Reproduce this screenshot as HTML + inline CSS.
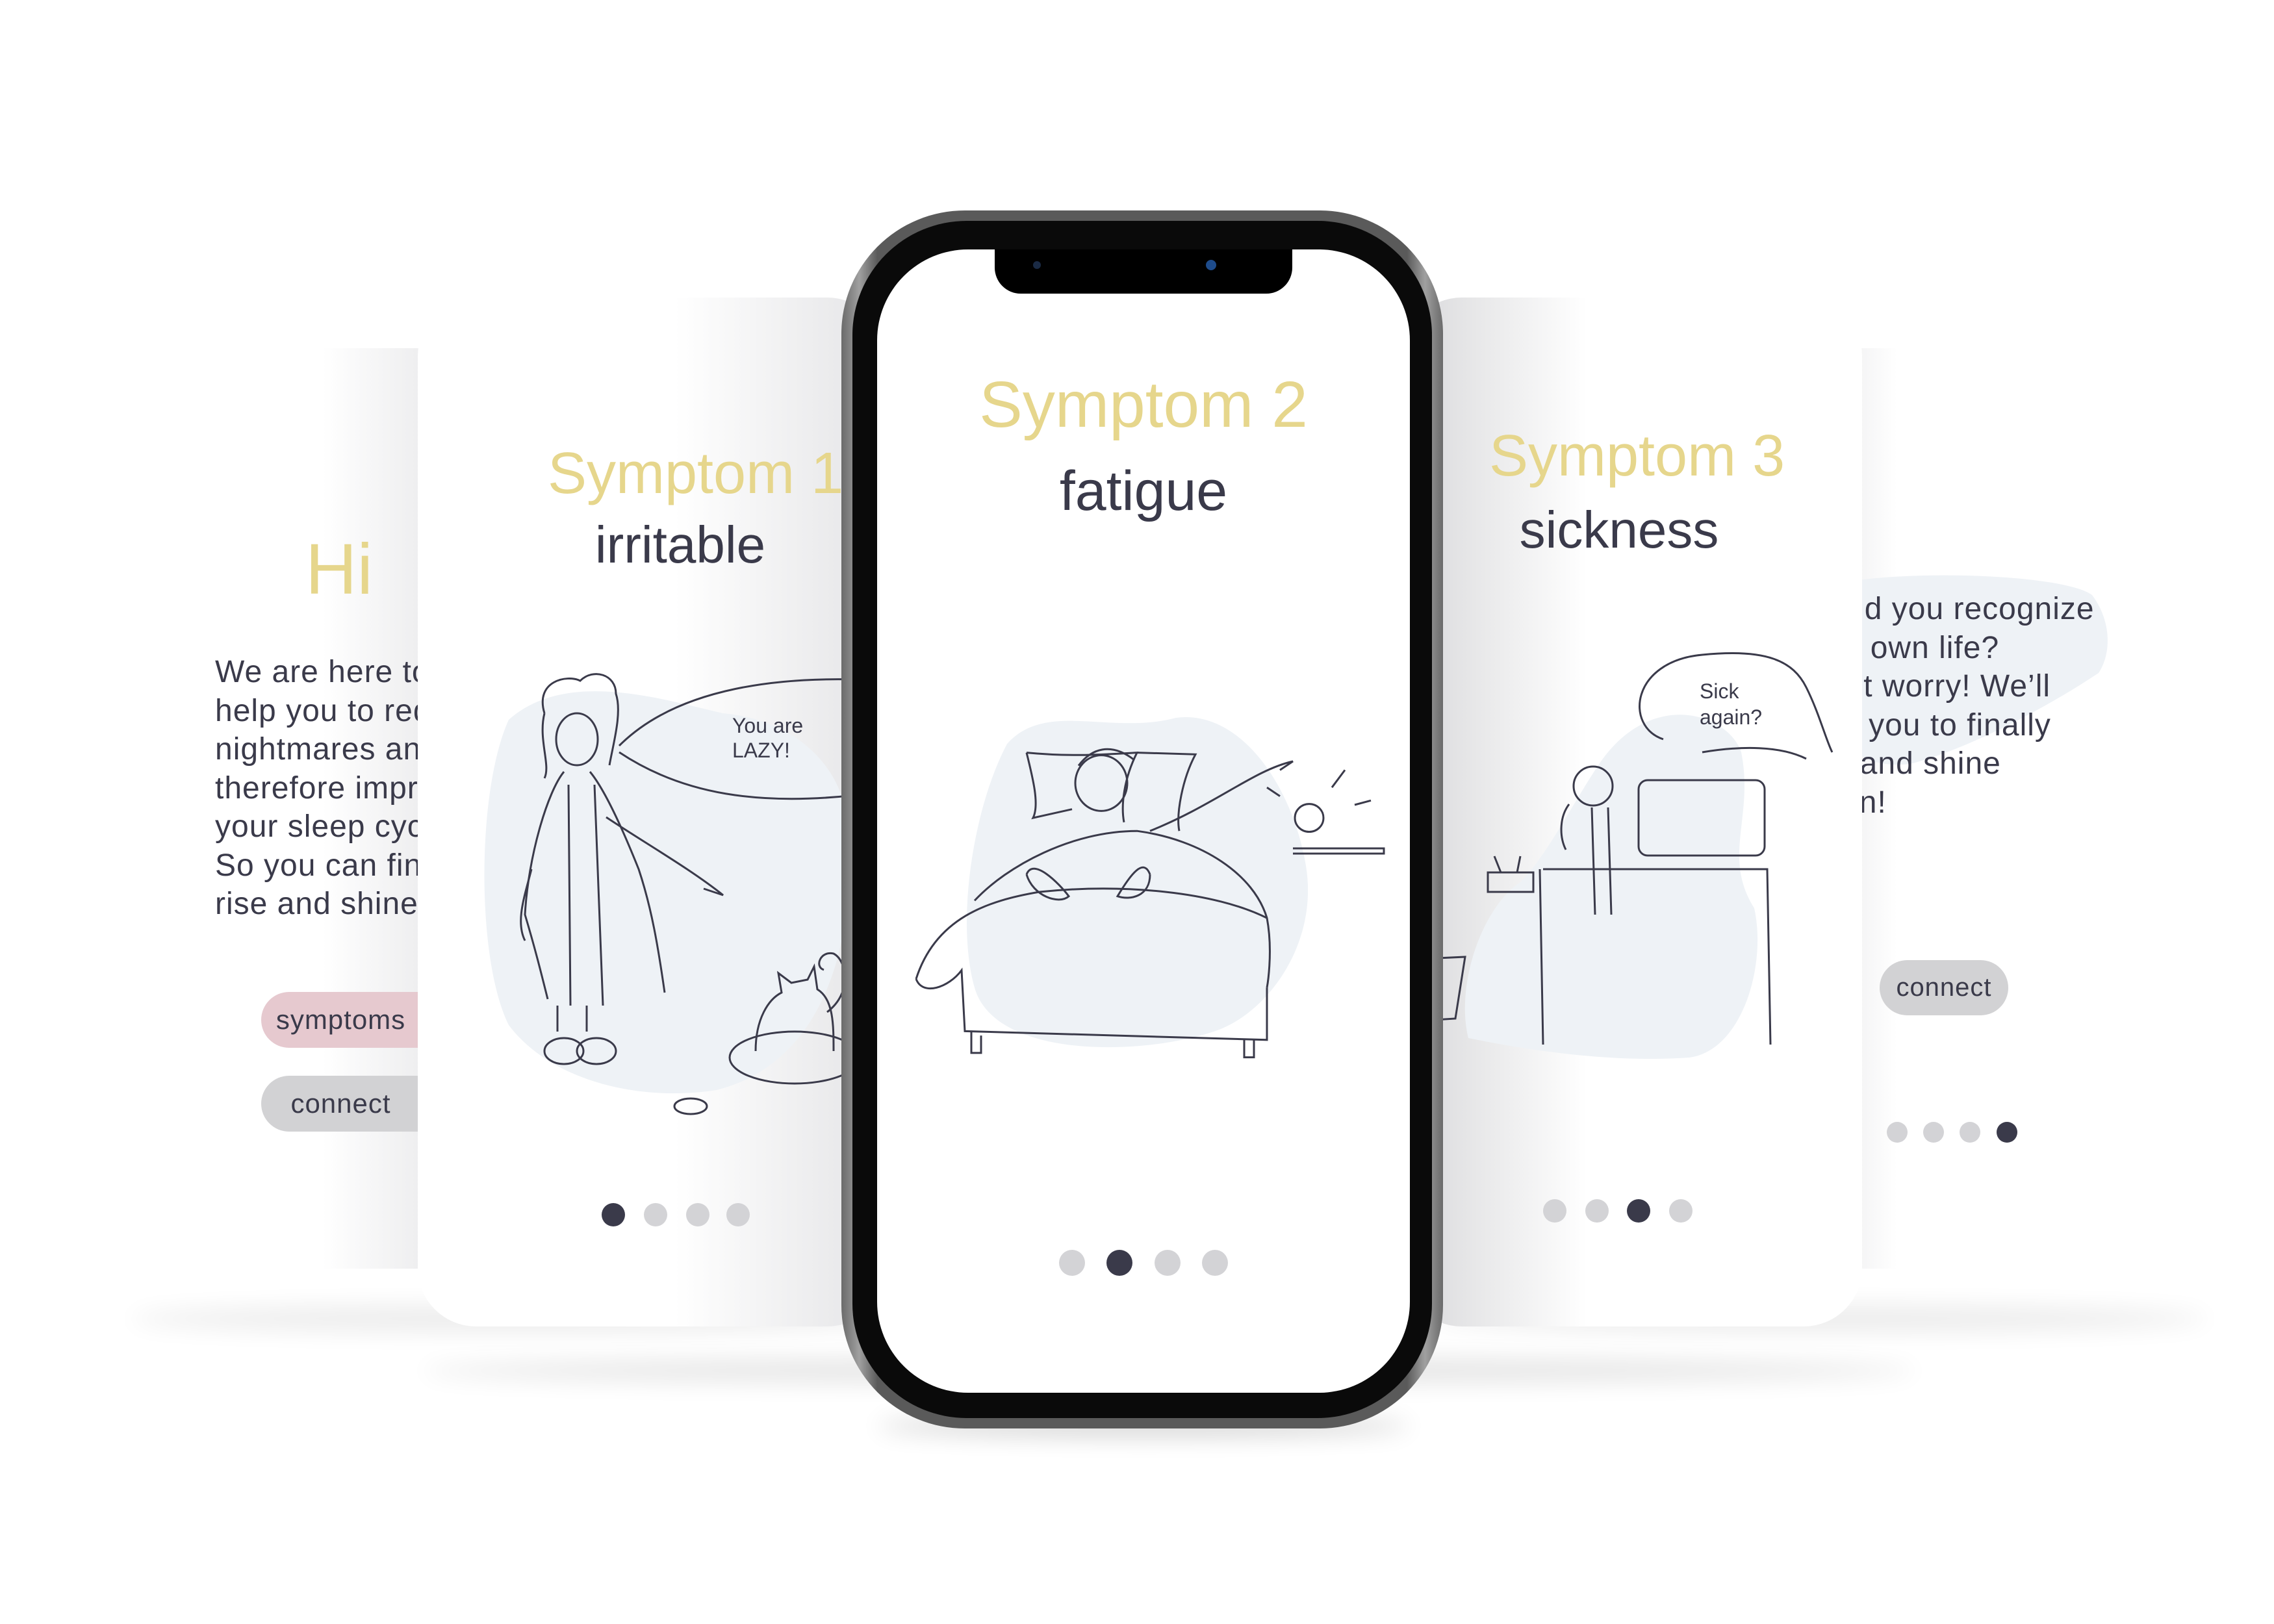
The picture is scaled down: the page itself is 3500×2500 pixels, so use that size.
<!DOCTYPE html>
<html><head><meta charset="utf-8"><style>
*{margin:0;padding:0;box-sizing:border-box}
body{width:3500px;height:2500px;background:#fff;position:relative;overflow:hidden;font-family:"Liberation Sans","DejaVu Sans",sans-serif}
.abs{position:absolute}
.card{position:absolute;background:#fff;border-radius:90px;overflow:hidden}
.sh{position:absolute;border-radius:50%;background:#000;filter:blur(18px)}
.y{color:#e6d68c;position:absolute;white-space:nowrap;line-height:1;text-align:center}
.d{color:#3a3a4a;position:absolute;white-space:nowrap;line-height:1;text-align:center}
.dot{position:absolute;border-radius:50%;background:#d3d3d6}
.dot.a{background:#3a3a4a}
.pill{position:absolute;border-radius:60px;text-align:center;color:#3a3a4a;letter-spacing:1px}
.body{position:absolute;color:#3a3a4a;font-size:48px;line-height:59.5px;letter-spacing:1px;white-space:nowrap}
svg g{vector-effect:non-scaling-stroke}
</style></head><body>

<div class="sh" style="left:200px;top:2010px;width:1200px;height:40px;opacity:.08"></div>
<div class="sh" style="left:2200px;top:2010px;width:1200px;height:40px;opacity:.08"></div>
<div class="sh" style="left:650px;top:2090px;width:2300px;height:40px;opacity:.10"></div>
<div class="sh" style="left:1350px;top:2180px;width:820px;height:30px;opacity:.18"></div>

<!-- back left card -->
<div class="card" style="left:160px;top:536px;width:560px;height:1417px;border-radius:80px;background:linear-gradient(90deg,#fff 0%,#fff 60%,#e6e6e8 100%)"></div>
<div class="y" style="left:470px;top:822px;font-size:110px;text-align:left">Hi</div>
<div class="body" style="left:331px;top:1005px;width:312px;overflow:hidden">We are here to<br>help you to reduce<br>nightmares and<br>therefore improve<br>your sleep cycle.<br>So you can finally<br>rise and shine!</div>
<div class="pill" style="left:402px;top:1527px;width:300px;height:86px;background:#e6c9cf;font-size:42px;line-height:86px;padding-right:55px">symptoms</div>
<div class="pill" style="left:402px;top:1656px;width:300px;height:86px;background:#d2d2d4;font-size:42px;line-height:86px;padding-right:55px">connect</div>

<!-- back right card -->
<div class="card" style="left:2780px;top:536px;width:560px;height:1417px;border-radius:80px;background:linear-gradient(90deg,#e6e6e8 0%,#fff 25%,#fff 100%)">
<svg class="abs" style="left:0;top:0" width="560" height="1417"><path d="M60 360 C180 340 400 350 440 380 C470 420 470 470 450 500 C360 560 240 620 160 640 C80 650 40 600 40 540 Z" fill="#eef2f6"/></svg>
<div class="body" style="left:-13px;top:372px">Could you recognize<br>your own life?<br>Don't worry! We’ll<br>help you to finally<br>rise and shine<br>again!</div>
<div class="pill" style="left:113px;top:942px;width:198px;height:85px;background:#d2d2d4;font-size:40px;line-height:85px">connect</div>
<div class="dot" style="left:124px;top:1191px;width:32px;height:32px"></div>
<div class="dot" style="left:180px;top:1191px;width:32px;height:32px"></div>
<div class="dot" style="left:236px;top:1191px;width:32px;height:32px"></div>
<div class="dot a" style="left:293px;top:1191px;width:32px;height:32px"></div>
</div>

<!-- left card -->
<div class="card" style="left:643px;top:458px;width:720px;height:1584px;background:linear-gradient(90deg,#fff 0%,#fff 55%,#e4e4e6 100%)">
<svg class="abs" style="left:0;top:0" width="720" height="1584">
<path d="M140 650 C230 570 380 620 470 640 C580 650 650 720 660 800 C680 1000 620 1180 460 1220 C330 1240 200 1200 140 1120 C90 1020 90 760 140 650Z" fill="#eef2f6"/>
<g fill="none" stroke="#3a3a4a" stroke-width="3">
<path d="M195 640 C180 590 230 580 250 590 C270 570 305 580 305 610 C315 640 300 690 295 720"/>
<path d="M195 640 C185 680 205 720 195 740"/>
<ellipse cx="245" cy="680" rx="32" ry="40"/>
<path d="M225 730 C200 760 170 860 165 950 C180 1000 190 1040 200 1080 M265 730 C290 760 320 830 340 880 C360 940 370 1000 380 1070"/>
<path d="M232 750 L235 1090 M272 750 L285 1090"/>
<path d="M290 800 C350 840 420 880 470 920 L440 910"/>
<path d="M175 880 C165 920 150 960 165 990"/>
<path d="M215 1090 L215 1130 M260 1090 L260 1130"/>
<ellipse cx="225" cy="1160" rx="30" ry="20"/><ellipse cx="275" cy="1160" rx="30" ry="20"/>
<path d="M310 690 C400 600 560 580 720 590 M310 700 C400 760 520 790 720 760"/>
<ellipse cx="580" cy="1170" rx="100" ry="40"/>
<path d="M520 1160 C520 1110 540 1080 560 1070 L555 1040 L575 1055 L600 1050 L610 1030 L615 1065 C640 1080 640 1120 640 1160"/>
<path d="M630 1100 C670 1070 660 1020 640 1010 C620 1005 610 1030 625 1035"/>
<ellipse cx="420" cy="1245" rx="25" ry="12"/>
</g>
<text x="484" y="670" font-size="32" fill="#3a3a4a" font-family="Liberation Sans">You are</text>
<text x="484" y="708" font-size="32" fill="#3a3a4a" font-family="Liberation Sans">LAZY!</text>
</svg>
</div>
<div class="y" style="left:843px;top:684px;width:400px;font-size:90px">Symptom 1</div>
<div class="d" style="left:847px;top:799px;width:400px;font-size:80px">irritable</div>
<div class="dot a" style="left:926px;top:1852px;width:36px;height:36px"></div>
<div class="dot" style="left:991px;top:1852px;width:36px;height:36px"></div>
<div class="dot" style="left:1056px;top:1852px;width:36px;height:36px"></div>
<div class="dot" style="left:1118px;top:1852px;width:36px;height:36px"></div>

<!-- right card -->
<div class="card" style="left:2160px;top:458px;width:706px;height:1584px;background:linear-gradient(90deg,#d8d8da 0%,#fff 40%,#fff 100%)">
<svg class="abs" style="left:0;top:0" width="706" height="1584">
<path d="M300 720 C380 600 500 640 520 700 C540 800 490 860 540 940 C560 1030 520 1160 440 1170 C300 1180 150 1150 100 1140 C80 1060 120 940 180 900 C220 860 260 780 300 720Z" fill="#eef2f6"/>
<g fill="none" stroke="#3a3a4a" stroke-width="3">
<path d="M400 680 C340 660 350 560 460 550 C560 540 600 560 620 600 C640 640 650 680 660 700 M460 700 C520 690 580 690 620 710"/>
<path d="M210 880 L215 1150 M215 880 L560 880 L565 1150"/>
<rect x="362" y="743" width="194" height="116" rx="14"/>
<circle cx="292" cy="752" r="30"/>
<path d="M255 780 C240 800 240 830 250 850 M290 785 L295 950 M315 785 L320 950"/>
<path d="M130 885 L200 885 L200 915 L130 915 Z M140 860 L150 885 M180 860 L175 885"/>
<path d="M-10 1020 L95 1015 L80 1110 L0 1115"/>
</g>
<text x="456" y="617" font-size="32" fill="#3a3a4a" font-family="Liberation Sans">Sick</text>
<text x="456" y="657" font-size="32" fill="#3a3a4a" font-family="Liberation Sans">again?</text>
</svg>
</div>
<div class="y" style="left:2292px;top:657px;width:400px;font-size:90px">Symptom 3</div>
<div class="d" style="left:2292px;top:776px;width:400px;font-size:80px">sickness</div>
<div class="dot" style="left:2375px;top:1846px;width:36px;height:36px"></div>
<div class="dot" style="left:2440px;top:1846px;width:36px;height:36px"></div>
<div class="dot a" style="left:2504px;top:1846px;width:36px;height:36px"></div>
<div class="dot" style="left:2569px;top:1846px;width:36px;height:36px"></div>

<!-- phone -->
<div class="abs" style="left:1295px;top:324px;width:926px;height:1875px;border-radius:190px;background:linear-gradient(90deg,#6a6a6a,#a0a0a0 3%,#5a5a5a 6%,#5a5a5a 94%,#a0a0a0 97%,#6a6a6a)"></div>
<div class="abs" style="left:1312px;top:340px;width:892px;height:1843px;border-radius:176px;background:#0a0a0a"></div>
<div class="abs" style="left:1350px;top:384px;width:820px;height:1760px;border-radius:140px;background:#fff;overflow:hidden">
<div class="abs" style="left:181px;top:0;width:458px;height:68px;background:#000;border-radius:0 0 40px 40px"></div>
<div class="abs" style="left:240px;top:18px;width:12px;height:12px;border-radius:50%;background:#1a2a44"></div>
<div class="abs" style="left:506px;top:16px;width:16px;height:16px;border-radius:50%;background:#1e4c8c"></div>
<svg class="abs" style="left:0;top:0" width="820" height="1760">
<g transform="matrix(1,0,0,1.34,0,-217)">
<path d="M200 730 C260 680 360 720 460 700 C560 690 640 780 660 870 C680 960 600 1040 520 1060 C400 1090 180 1090 150 1010 C120 930 150 800 200 730Z" fill="#eef2f6"/>
<g fill="none" stroke="#3a3a4a" stroke-width="3" style="vector-effect:non-scaling-stroke">
<path vector-effect="non-scaling-stroke" d="M230 740 C300 745 350 742 400 740 C380 770 375 800 380 820 M230 740 C240 770 250 800 240 815 L300 805"/>
<path vector-effect="non-scaling-stroke" d="M400 740 L490 742 C470 770 460 810 465 830"/>
<ellipse vector-effect="non-scaling-stroke" cx="345" cy="775" rx="40" ry="32"/>
<path vector-effect="non-scaling-stroke" d="M310 755 C330 735 360 728 395 748"/>
<path vector-effect="non-scaling-stroke" d="M150 910 C200 870 300 830 400 830 C500 840 580 880 600 930 C610 970 600 1010 600 1010"/>
<path vector-effect="non-scaling-stroke" d="M60 1000 C90 930 170 910 250 900 C380 890 520 900 600 930"/>
<path vector-effect="non-scaling-stroke" d="M60 1000 C70 1020 110 1010 130 990 L135 1060 L600 1070 L600 1010"/>
<path vector-effect="non-scaling-stroke" d="M145 1060 L145 1085 L160 1085 L160 1065 M565 1070 L565 1090 L580 1090 L580 1070"/>
<path vector-effect="non-scaling-stroke" d="M230 880 C240 860 280 890 295 905 C280 915 240 905 230 880 M420 880 C410 860 390 880 370 905 C390 910 420 905 420 880"/>
<path vector-effect="non-scaling-stroke" d="M420 830 C520 800 580 760 640 750 L620 760 M640 850 L780 850 L780 856 L640 856"/>
<ellipse vector-effect="non-scaling-stroke" cx="665" cy="815" rx="22" ry="16"/>
<path vector-effect="non-scaling-stroke" d="M700 780 L720 760 M735 800 L760 795 M620 790 L600 780"/>
</g></g>
</svg>
<div class="y" style="left:0;width:820px;top:189px;font-size:100px">Symptom 2</div>
<div class="d" style="left:0;width:820px;top:329px;font-size:86px">fatigue</div>
<div class="dot" style="left:280px;top:1540px;width:40px;height:40px"></div>
<div class="dot a" style="left:353px;top:1540px;width:40px;height:40px"></div>
<div class="dot" style="left:427px;top:1540px;width:40px;height:40px"></div>
<div class="dot" style="left:500px;top:1540px;width:40px;height:40px"></div>
</div>

</body></html>
